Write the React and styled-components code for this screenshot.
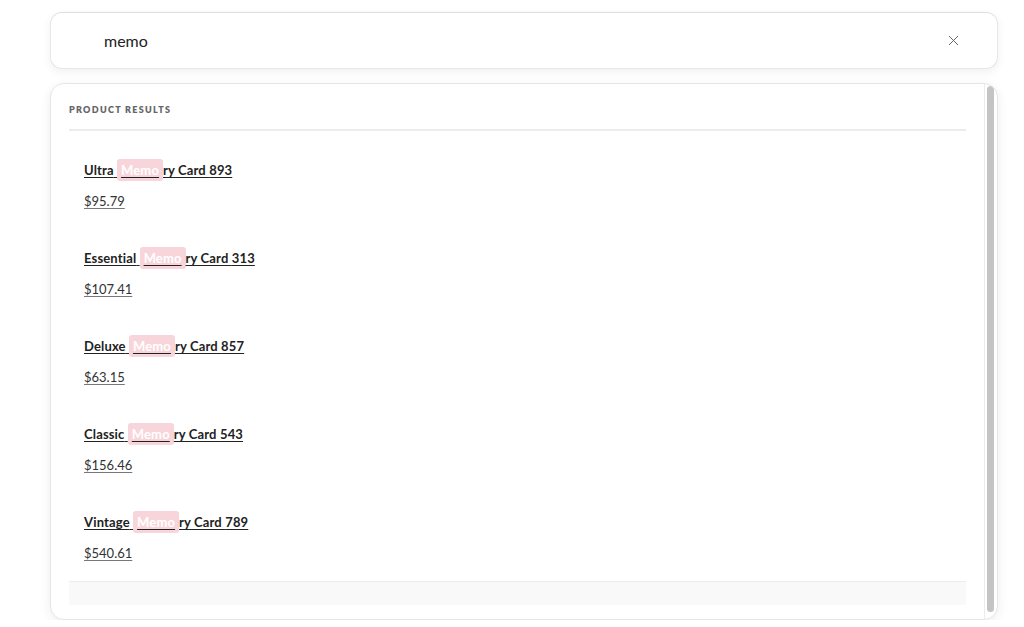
import React from 'react';
import styled, { createGlobalStyle } from 'styled-components';
import { X } from 'lucide-react';

const GlobalStyle = createGlobalStyle`
  html, body {
    margin: 0;
    padding: 0;
    background: #fff;
    font-family: Lato, "Open Sans", sans-serif;
  }
`;

const products = [
  { prefix: 'Ultra', num: 893, price: '$95.79' },
  { prefix: 'Essential', num: 313, price: '$107.41' },
  { prefix: 'Deluxe', num: 857, price: '$63.15' },
  { prefix: 'Classic', num: 543, price: '$156.46' },
  { prefix: 'Vintage', num: 789, price: '$540.61' },
];

const App = () => {
  const [query, setQuery] = React.useState('memo');

  return (
    <Page>
      <GlobalStyle />
      <SearchBox>
        <SearchInput value={query} onChange={(e) => setQuery(e.target.value)} />
        <ClearButton onClick={() => setQuery('')}>
          <X size={17} strokeWidth={1.4} color="#666" />
        </ClearButton>
      </SearchBox>
      <ResultsPanel>
        <ResultsBody>
          <SectionHeader>Product Results</SectionHeader>
          <ResultList>
            {products.map((p) => (
              <ResultItem key={p.num}>
                <ItemTitle href="#">
                  {p.prefix} <Mark>Memo</Mark>ry Card {p.num}
                </ItemTitle>
                <ItemPrice href="#">{p.price}</ItemPrice>
              </ResultItem>
            ))}
          </ResultList>
          <Footer />
        </ResultsBody>
        <ScrollTrack>
          <ScrollThumb />
        </ScrollTrack>
      </ResultsPanel>
    </Page>
  );
};

const Page = styled.div`
  width: 948px;
  padding: 12px 0 0 50px;
  display: flex;
  flex-direction: column;
  gap: 14px;
`;

const SearchBox = styled.div`
  height: 55px;
  border: 1px solid #e6e6e6;
  border-top-color: #dedede;
  border-radius: 12px;
  box-shadow: 0 3px 10px rgba(0, 0, 0, 0.06);
  display: flex;
  align-items: center;
  padding: 0 35px 0 53px;
  background: #fff;
`;

const SearchInput = styled.input`
  flex: 1;
  border: none;
  outline: none;
  font-family: inherit;
  font-size: 16px;
  color: #222;
  background: transparent;
  padding: 0;
`;

const ClearButton = styled.button`
  border: none;
  background: none;
  padding: 0;
  width: 17px;
  height: 17px;
  display: flex;
  align-items: center;
  justify-content: center;
  cursor: pointer;
`;

const ResultsPanel = styled.div`
  height: 535px;
  border: 1px solid #e6e6e6;
  border-radius: 14px;
  box-shadow: 0 3px 12px rgba(0, 0, 0, 0.07);
  background: #fff;
  overflow: hidden;
  display: flex;
`;

const ResultsBody = styled.div`
  flex: 1;
  padding: 0 18px;
  min-width: 0;
`;

const ScrollTrack = styled.div`
  box-sizing: border-box;
  width: 13px;
  border-left: 1px solid #ececec;
  padding: 2px 3px 7px 2px;
  display: flex;
`;

const ScrollThumb = styled.div`
  flex: 1;
  background: #c4c4c4;
  border-radius: 4px;
`;

const SectionHeader = styled.div`
  margin-top: 20px;
  padding-bottom: 13px;
  border-bottom: 2px solid #ececec;
  font-size: 9px;
  line-height: 12px;
  font-weight: 800;
  letter-spacing: 1.3px;
  text-transform: uppercase;
  color: #666;
`;

const ResultList = styled.div`
  padding-top: 10px;
`;

const ResultItem = styled.div`
  display: flex;
  flex-direction: column;
  align-items: flex-start;
  gap: 10px;
  padding: 18px 15px;
`;

const ItemTitle = styled.a`
  font-size: 13px;
  line-height: 22px;
  font-weight: 700;
  color: #222;
  letter-spacing: 0.15px;
  text-decoration: underline;
  text-underline-offset: 2px;
`;

const Mark = styled.span`
  background: #f8d5db;
  color: #fff;
  padding: 3px 4px;
  border-radius: 3px;
`;

const ItemPrice = styled.a`
  font-size: 13px;
  line-height: 20px;
  color: #333;
  text-decoration: underline;
  text-decoration-color: #777;
  text-underline-offset: 2px;
`;

const Footer = styled.div`
  height: 23px;
  background: #f9f9f9;
  border-top: 1px solid #ececec;
`;

export default App;
